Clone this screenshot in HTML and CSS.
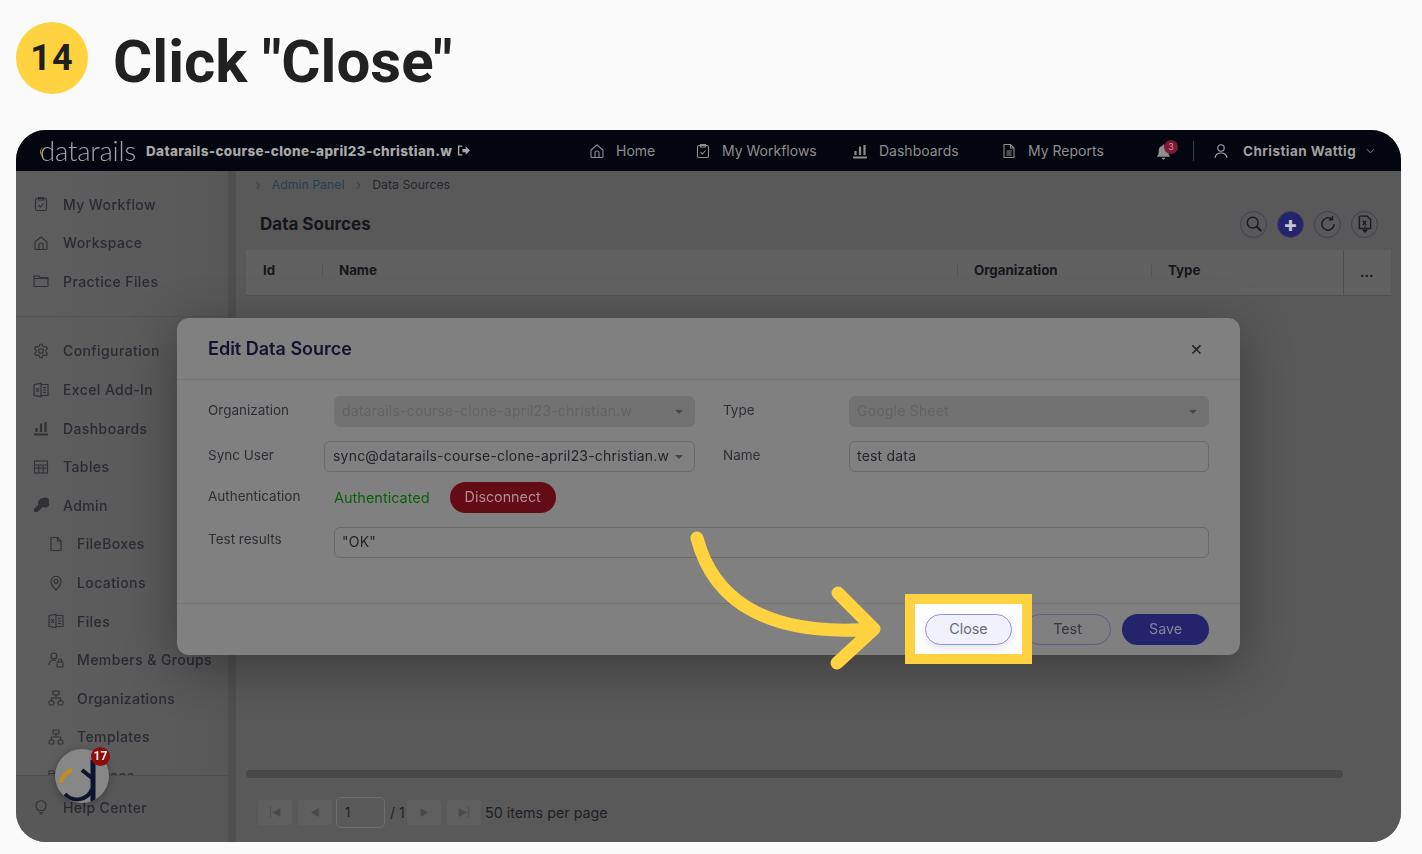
FILE: index.html
```html
<!DOCTYPE html>
<html lang="en">
<head>
<meta charset="utf-8">
<title>Click "Close"</title>
<link rel="stylesheet" href="styles.css">
</head>
<body>
<svg class="defs" width="0" height="0" aria-hidden="true">
  <symbol id="i-home" viewBox="0 0 16 16"><path d="M2 7l6-5 6 5v6.500a1 1 0 0 1-1 1H3a1 1 0 0 1-1-1z M6 14.500V10a2 2 0 0 1 4 0v4.500"/></symbol>
  <symbol id="i-clip" viewBox="0 0 16 16"><rect x="2.500" y="2.500" width="11" height="12" rx="1.500"/><path d="M5.500 1.500h5v2.500h-5z M5.500 9l2 2 3-3.500"/></symbol>
  <symbol id="i-bars" viewBox="0 0 16 16"><path d="M1 14.500h14 M3.500 12V8 M8 12V3.500 M12.500 12V2" stroke-width="2.200"/></symbol>
  <symbol id="i-doc" viewBox="0 0 16 16"><path d="M3 1.500h6.500l3.500 3.500v9.500H3z M9.500 1.500V5H13 M5.500 8h5 M5.500 10h5 M5.500 12h5"/></symbol>
  <symbol id="i-folder" viewBox="0 0 16 16"><path d="M1 3h5l1 1.500h8v9H1z M1 5.500h14"/></symbol>
  <symbol id="i-gear" viewBox="0 0 16 16"><path d="M6.800 1.200h2.400l.4 2 1.700 1 1.900-.7 1.200 2.100-1.500 1.300v2.200l1.500 1.300-1.200 2.100-1.900-.7-1.700 1-.4 2H6.800l-.4-2-1.700-1-1.900.7-1.200-2.100 1.500-1.300V6.900L1.600 5.600l1.200-2.100 1.900.7 1.700-1z"/><circle cx="8" cy="8" r="2.300"/></symbol>
  <symbol id="i-excel" viewBox="0 0 16 16"><path d="M1 2.500l7 -1v13l-7-1z M8 2.500h7v11H8z M10 5.500h3 M10 8h3 M10 10.500h3 M3 6l3 4 M6 6l-3 4"/></symbol>
  <symbol id="i-table" viewBox="0 0 16 16"><rect x="1.500" y="2" width="13" height="12"/><path d="M1.500 6h13 M1.500 9h13 M5.800 6v8 M10.200 6v8"/></symbol>
  <symbol id="i-key" viewBox="0 0 16 16"><path class="solid" d="M10 1a5 5 0 0 0-4.700 6.700L1 12v3h3.500l5-5.100A5 5 0 1 0 10 1z"/></symbol>
  <symbol id="i-file" viewBox="0 0 16 16"><path d="M3 1.500h6.500L13 5v9.500H3z M9.500 1.500V5H13"/></symbol>
  <symbol id="i-pin" viewBox="0 0 16 16"><path d="M8 15s5-4.800 5-8.700A5 5 0 0 0 3 6.300C3 10.200 8 15 8 15z"/><circle cx="8" cy="6.300" r="2"/></symbol>
  <symbol id="i-members" viewBox="0 0 16 16"><circle cx="6" cy="4" r="3"/><path d="M1 13c0-3 2-5 5-5 1 0 1.500.2 2 .5"/><rect x="9" y="10" width="6" height="5" rx=".8"/><path d="M10.500 10V8.500a1.500 1.500 0 0 1 3 0V10"/></symbol>
  <symbol id="i-org" viewBox="0 0 16 16"><rect x="5" y="1" width="6" height="4" rx=".8"/><rect x="1" y="11" width="5" height="4" rx="1.500"/><rect x="10" y="11" width="5" height="4" rx="1.500"/><path d="M8 5v3 M3.500 11V8h9v3"/></symbol>
  <symbol id="i-bulb" viewBox="0 0 16 16"><path d="M5.500 11.500C4 10.300 3 8.800 3 6.700a5 5 0 0 1 10 0c0 2.100-1 3.600-2.500 4.800z M6 13.500h4 M6.500 15h3"/></symbol>
  <symbol id="i-user" viewBox="0 0 16 16"><circle cx="8" cy="5" r="3.200"/><path d="M2 15c.5-3.500 2.800-5 6-5s5.500 1.500 6 5"/></symbol>
  <symbol id="i-search" viewBox="0 0 16 16"><circle cx="6.800" cy="6.800" r="4.800"/><path d="M10.300 10.300l4.200 4.200" stroke-width="1.800"/></symbol>
  <symbol id="i-refresh" viewBox="0 0 16 16"><path d="M13.500 8a5.500 5.500 0 1 1-1.800-4.100 M12 1v3.300H8.800"/></symbol>
  <symbol id="i-export" viewBox="0 0 16 16"><path d="M3 1h7l3 3v8H9 M7 12H3V1 M6 5l3 4 M9 5L6 9 M8 10v5 M6 13l2 2 2-2"/></symbol>
</svg>

<header class="title-row">
  <span class="step-badge">14</span>
  <h1 class="step-title">Click "Close"</h1>
</header>

<main class="frame">
  <div class="app">
    <div class="topbar">
      <span class="logo">datarails<i class="logo-arc"></i></span>
      <span class="org-name">Datarails-course-clone-april23-christian.w</span>
      <svg class="org-exit" viewBox="0 0 12 12"><path d="M5 2H1.500v8H5" fill="none" stroke="currentColor" stroke-width="1.300"/><path d="M5 4.500h3V2l4 4-4 4V7.500H5z" fill="currentColor"/></svg>
      <nav class="topnav">
        <a class="topnav-item"><svg class="ico"><use href="#i-home"/></svg>Home</a>
        <a class="topnav-item"><svg class="ico"><use href="#i-clip"/></svg>My Workflows</a>
        <a class="topnav-item"><svg class="ico"><use href="#i-bars"/></svg>Dashboards</a>
        <a class="topnav-item"><svg class="ico"><use href="#i-doc"/></svg>My Reports</a>
      </nav>
      <span class="bell">
        <svg viewBox="0 0 16 16" class="bell-ico"><path d="M8 1a1 1 0 0 1 1 1.100c2.400.5 3.500 2.400 3.500 4.900 0 2.500.7 3.800 1.500 4.800v.7H2v-.7c.8-1 1.500-2.300 1.500-4.800 0-2.500 1.100-4.400 3.500-4.900A1 1 0 0 1 8 1z M6.300 13.500h3.400A1.700 1.700 0 0 1 6.300 13.500z"/></svg>
        <span class="bell-count">3</span>
      </span>
      <span class="top-divider"></span>
      <svg class="ico user-ico"><use href="#i-user"/></svg>
      <span class="user-name">Christian Wattig</span>
      <svg class="user-chev" viewBox="0 0 10 6"><path d="M1 1l4 4 4-4" fill="none" stroke="currentColor"/></svg>
    </div>

    <div class="workspace">
      <aside class="sidebar">
        <div class="side-list">
          <a class="side-item"><svg class="ico"><use href="#i-clip"/></svg>My Workflow</a>
          <a class="side-item"><svg class="ico"><use href="#i-home"/></svg>Workspace</a>
          <a class="side-item"><svg class="ico"><use href="#i-folder"/></svg>Practice Files</a>
          <div class="side-divider"></div>
          <a class="side-item"><svg class="ico"><use href="#i-gear"/></svg>Configuration</a>
          <a class="side-item"><svg class="ico"><use href="#i-excel"/></svg>Excel Add-In</a>
          <a class="side-item"><svg class="ico"><use href="#i-bars"/></svg>Dashboards</a>
          <a class="side-item"><svg class="ico"><use href="#i-table"/></svg>Tables</a>
          <a class="side-item"><svg class="ico"><use href="#i-key"/></svg>Admin</a>
          <a class="side-item sub"><svg class="ico"><use href="#i-file"/></svg>FileBoxes</a>
          <a class="side-item sub"><svg class="ico"><use href="#i-pin"/></svg>Locations</a>
          <a class="side-item sub"><svg class="ico"><use href="#i-excel"/></svg>Files</a>
          <a class="side-item sub"><svg class="ico"><use href="#i-members"/></svg>Members &amp; Groups</a>
          <a class="side-item sub"><svg class="ico"><use href="#i-org"/></svg>Organizations</a>
          <a class="side-item sub"><svg class="ico"><use href="#i-org"/></svg>Templates</a>
          <a class="side-item sub"><svg class="ico"><use href="#i-folder"/></svg>Sources</a>
        </div>
        <div class="side-foot">
          <a class="side-item"><svg class="ico"><use href="#i-bulb"/></svg>Help Center</a>
        </div>
      </aside>
      <div class="side-scroll"></div>

      <section class="content">
        <div class="crumbs">
          <span class="crumb-sep">›</span><span class="crumb-link">Admin Panel</span><span class="crumb-sep">›</span><span>Data Sources</span>
        </div>
        <div class="page-head">
          <h2 class="page-title">Data Sources</h2>
          <div class="tools">
            <span class="tool"><svg class="ico"><use href="#i-search"/></svg></span>
            <span class="tool primary">+</span>
            <span class="tool"><svg class="ico"><use href="#i-refresh"/></svg></span>
            <span class="tool"><svg class="ico"><use href="#i-export"/></svg></span>
          </div>
        </div>
        <div class="table-head">
          <span class="th">Id</span>
          <span class="th">Name</span>
          <span class="th">Organization</span>
          <span class="th">Type</span>
          <span class="th more">...</span>
        </div>
        <div class="table-body"></div>
        <div class="hscroll"></div>
        <div class="pager">
          <span class="page-btn">|◀</span>
          <span class="page-btn">◀</span>
          <span class="page-input">1</span>
          <span class="page-total">/ 1</span>
          <span class="page-btn">▶</span>
          <span class="page-btn">▶|</span>
          <span class="page-size">50 items per page</span>
        </div>
      </section>
    </div>
  </div>

  <div class="chat-bubble">
    <svg viewBox="0 0 54 54" class="chat-logo">
      <path d="M6 34A15.500 15.500 0 0 1 17 21" fill="none" stroke="#c58b1c" stroke-width="4"/>
      <path d="M10 45A16 16 0 0 0 37 40 M27 21L37 29" fill="none" stroke="#0d1430" stroke-width="4"/>
      <path d="M38 11V54" fill="none" stroke="#0d1430" stroke-width="5"/>
    </svg>
    <span class="chat-count">17</span>
  </div>

  <div class="modal">
    <div class="modal-head">
      <h3 class="modal-title">Edit Data Source</h3>
      <span class="modal-x">×</span>
    </div>
    <div class="modal-body">
      <div class="form-grid">
        <label class="f-label">Organization</label>
        <div class="select disabled">datarails-course-clone-april23-christian.w</div>
        <label class="f-label right">Type</label>
        <div class="select disabled">Google Sheet</div>

        <label class="f-label">Sync User</label>
        <div class="select sync">sync@datarails-course-clone-april23-christian.w</div>
        <label class="f-label right">Name</label>
        <div class="input">test data</div>

        <label class="f-label">Authentication</label>
        <div class="auth-cell"><span class="auth-ok">Authenticated</span><span class="btn danger">Disconnect</span></div>
        <span></span><span></span>

        <label class="f-label test">Test results</label>
        <div class="input wide">"OK"</div>
      </div>
    </div>
    <div class="modal-foot">
      <span class="btn outline">Close</span>
      <span class="btn outline">Test</span>
      <span class="btn solid">Save</span>
    </div>
  </div>

  <div class="spotlight"><span class="spot-btn">Close</span></div>
</main>

<svg class="arrow" viewBox="0 0 220 150" aria-hidden="true">
  <path d="M7 7C24 72 80 106 184 98 M148 62l36 36-37 34" fill="none" stroke="#ffd23f" stroke-width="13" stroke-linecap="round" stroke-linejoin="round"/>
</svg>
</body>
</html>
```

FILE: styles.css
```css
* { box-sizing: border-box; }
html, body { margin: 0; height: 854px; overflow: hidden; }
body { background: #fafafa; font-family: "Inter", "Liberation Sans", sans-serif; position: relative; }
.defs { position: absolute; }
a { display: flex; }
.ico { width: 16px; height: 16px; flex: none; fill: none; stroke: currentColor; stroke-width: 1.100; }
.solid { fill: currentColor; stroke: none; }

.title-row { display: flex; gap: 25px; padding: 22px 16px 0; height: 108px; align-items: flex-start; }
.step-badge { width: 72px; height: 72px; border-radius: 50%; background: #ffd23f; display: flex; align-items: center; justify-content: center; font: 700 36px "Roboto", sans-serif; color: #1f1f1f; letter-spacing: 1px; }
.step-title { margin: 0; font: 700 60px/80px "Roboto", sans-serif; color: #212121; }

.frame { position: absolute; left: 16px; top: 130px; width: 1385px; height: 712px; border-radius: 30px; overflow: hidden; background: #5a5a5a; }
.app { height: 100%; display: flex; flex-direction: column; filter: blur(.4px); }

.topbar { height: 41px; flex: none; display: flex; align-items: center; background: #03060f; color: #a8a8a8; padding-left: 24px; font-size: 13.500px; }
.logo { position: relative; font: 300 27.500px/41px "Lato", sans-serif; color: #a5a5a5; width: 106px; letter-spacing: -.2px; }
.logo-arc { position: absolute; left: 0; top: 17px; width: 6px; height: 10px; border-left: 1.500px solid #c58b1c; border-radius: 6px 0 0 6px; }
.org-name { font-weight: 800; color: #a8a8a8; font-size: 13.500px; width: 311px; white-space: nowrap; letter-spacing: .35px; }
.org-exit { width: 13px; height: 13px; color: #a8a8a8; }
.topnav { display: grid; grid-template-columns: 106px 157px 149px 154px; margin-left: 119px; }
.topnav-item { align-items: center; gap: 11px; color: #8e8e8e; font-size: 14px; white-space: nowrap; }
.bell { position: relative; width: 30px; height: 22px; display: flex; }
.bell-ico { width: 17px; height: 18px; margin-top: 3px; fill: #8f8f8f; }
.bell-count { position: absolute; left: 9px; top: 0; width: 14px; height: 14px; border-radius: 50%; background: #7d1735; color: #c9a0aa; font-size: 9px; line-height: 14px; text-align: center; }
.top-divider { width: 1px; height: 20px; background: #3e3e3e; margin-left: 8px; margin-right: 19px; }
.user-ico { margin-right: 14px; }
.user-name { font-weight: 700; color: #a0a0a0; width: 120px; font-size: 13.500px; white-space: nowrap; letter-spacing: .45px; }
.user-chev { width: 9px; height: 6px; margin-left: 3px; color: #8a8a8a; }

.workspace { flex: 1; min-height: 0; display: flex; }
.sidebar { width: 212px; flex: none; display: flex; flex-direction: column; background: linear-gradient(90deg, #5e5e5e, #585858); color: #33343c; overflow: hidden; position: relative; }
.side-list { padding-top: 13.900px; }
.side-item { height: 38.600px; align-items: center; gap: 14px; padding-left: 17px; font-size: 14px; font-weight: 500; letter-spacing: .4px; white-space: nowrap; color: #2a2b33; }
.side-item .ico { color: #303036; }
.side-item.sub { padding-left: 32px; gap: 13px; }
.side-divider { height: 1px; margin: 15px 0; background: #525252; }
.side-foot { position: absolute; left: 0; right: 0; top: 604px; bottom: 0; background: #585858; border-top: 1px solid #4f4f4f; padding-top: 12px; }
.side-scroll { width: 8px; flex: none; background: #4f4f4f; }

.content { flex: 1; min-width: 0; display: flex; flex-direction: column; padding: 0 10px 0 10px; background: #595959; }
.crumbs { height: 27px; display: flex; align-items: center; font-size: 12.300px; color: #26272e; padding-left: 9px; gap: 11px; }
.crumb-sep { color: #454545; font-size: 15px; line-height: 14px; }
.crumb-link { color: #263f55; }
.page-head { height: 52px; display: flex; align-items: center; justify-content: space-between; padding: 0 13px 0 14px; }
.page-title { margin: 0; font-size: 17px; font-weight: 700; color: #15161c; }
.tools { display: flex; gap: 10px; }
.tool { width: 27px; height: 27px; border-radius: 50%; border: 1px solid #404058; display: flex; align-items: center; justify-content: center; color: #1c1c20; }
.tool .ico { width: 18px; height: 18px; stroke-width: 1.300; }
.tool.primary { background: #23246b; color: #c4c4d4; font-size: 21px; font-weight: 800; line-height: 1; }
.table-head { height: 46px; flex: none; display: grid; grid-template-columns: 76px 635px 194px 192px 1fr; background: #616161; border-bottom: 1px solid #505050; align-items: center; padding-bottom: 6px; }
.th { padding-left: 17px; font-size: 13.300px; font-weight: 700; color: #15161c; position: relative; }
.th + .th::before { content: ""; position: absolute; left: 0; top: 1px; height: 14px; width: 1px; background: #565656; }
.th.more { align-self: stretch; margin-bottom: -6px; border-left: 1px solid #4c4c4c; line-height: 44px; padding-left: 16px; }
.th.more::before { display: none; }
.table-body { flex: 1; }
.hscroll { height: 8px; width: 1097px; border-radius: 4px; background: #484848; flex: none; }
.pager { height: 64px; flex: none; display: flex; align-items: center; padding: 4px 0 0 12px; color: #1f2027; font-size: 14px; }
.page-btn { width: 34px; height: 25px; margin-right: 6px; background: #5f5f5f; border-radius: 3px; display: flex; align-items: center; justify-content: center; color: #4a4a4a; font-size: 10px; }
.page-input { width: 49px; height: 31px; border: 1px solid #6e6e6e; border-radius: 5px; padding-left: 8px; line-height: 29px; margin-left: -2px; margin-right: 5px; font-size: 13px; }
.page-total { width: 15px; margin-right: 2px; white-space: nowrap; }
.page-size { margin-left: -2px; font-size: 14.300px; white-space: nowrap; }

.chat-bubble { position: absolute; left: 39px; top: 619px; width: 54px; height: 54px; border-radius: 50%; background: #878787; box-shadow: 0 2px 8px rgba(0,0,0,.3); }
.chat-logo { width: 54px; height: 54px; display: block; border-radius: 50%; }
.chat-count { position: absolute; left: 36px; top: -2px; width: 19px; height: 19px; border-radius: 50%; background: #8f0c0c; color: #eee; font: 700 12px/19px "Roboto", sans-serif; text-align: center; }

.modal { position: absolute; left: 161px; top: 188px; width: 1063px; height: 337px; border-radius: 12px; background: #808080; box-shadow: 0 12px 50px rgba(0,0,0,.35); display: flex; flex-direction: column; }
.modal-head { height: 62px; flex: none; display: flex; align-items: center; justify-content: space-between; padding: 0 37px 1px 31px; border-bottom: 1px solid #747474; }
.modal-title { margin: 0; font-size: 18px; font-weight: 600; color: #11132e; }
.modal-x { font-size: 20px; color: #20212a; line-height: 1; }
.modal-body { flex: 1; padding: 16px 31px 0; }
.form-grid { display: grid; grid-template-columns: 126px 361px 154px 360px; grid-template-rows: 45px 41px 45px 31px; align-items: start; color: #2c2d33; }
.f-label { font-size: 13.500px; line-height: 29px; color: #2e2f35; }
.f-label.right { padding-left: 28px; }
.f-label.test { transform: translateY(-2.500px); }
.select, .input { height: 31px; border: 1px solid #6a6a6a; border-radius: 6px; padding-left: 7px; line-height: 28px; font-size: 14px; letter-spacing: .2px; color: #24252b; position: relative; white-space: nowrap; overflow: hidden; }
.select::after { content: ""; position: absolute; right: 11px; top: 13px; border: 4px solid transparent; border-top: 4px solid #474747; border-bottom: 0; }
.select.disabled { background: #727272; border-color: #727272; color: #636363; }
.select.sync { margin-left: -10px; padding-left: 8px; }
.auth-cell { display: flex; align-items: center; gap: 20px; }
.auth-ok { color: #0a5f0a; font-size: 14.500px; }
.input.wide { grid-column: 2 / 5; }
.btn { height: 31px; width: 87px; border-radius: 16px; display: flex; align-items: center; justify-content: center; font-size: 14.300px; padding-bottom: 2px; }
.btn.danger { width: 106px; background: #640c16; color: #b08d90; }
.btn.outline { border: 1px solid #5d5d8a; color: #34353e; }
.btn.solid { background: #23246b; color: #84849e; }
.modal-foot { height: 52px; flex: none; border-top: 1px solid #747474; display: flex; justify-content: flex-end; padding: 10px 31px 0 0; gap: 11px; }

.spotlight { position: absolute; left: 889px; top: 464px; width: 127px; height: 70px; border: 10px solid #ffd23f; background: #fff; display: flex; align-items: center; justify-content: center; }
.spot-btn { width: 87px; height: 31px; border-radius: 16px; background: #f0f1fb; border: 1px solid #8f92e6; color: #6b6c78; font-size: 14.300px; padding-bottom: 1px; display: flex; align-items: center; justify-content: center; box-shadow: 0 4px 10px rgba(0,0,0,.1); }

.arrow { position: absolute; left: 690px; top: 531px; width: 220px; height: 150px; }
```
